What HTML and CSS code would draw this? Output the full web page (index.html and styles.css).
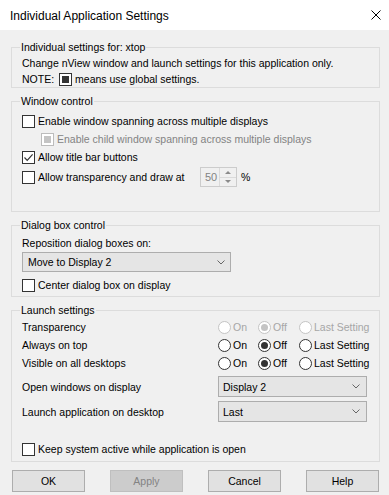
FILE: index.html
```html
<!DOCTYPE html>
<html>
<head>
<meta charset="utf-8">
<title>Individual Application Settings</title>
<link rel="stylesheet" href="styles.css">
</head>
<body>
<div class="titlebar">
  <span class="title">Individual Application Settings</span>
  <svg class="close" width="10" height="10" viewBox="0 0 10 10"><path d="M0.5 0.5 L9.5 9.5 M9.5 0.5 L0.5 9.5" stroke="#000" stroke-width="1" fill="none"/></svg>
</div>
<div class="content">
  <fieldset class="group g1">
    <legend>Individual settings for: xtop</legend>
    <div class="line">Change nView window and launch settings for this application only.</div>
    <div class="line"><span>NOTE:</span><span class="cb ind note-box"></span><span>means use global settings.</span></div>
  </fieldset>

  <fieldset class="group g2">
    <legend>Window control</legend>
    <div class="row"><span class="cb"></span><span>Enable window spanning across multiple displays</span></div>
    <div class="row indent disabled"><span class="cb dis ind"></span><span>Enable child window spanning across multiple displays</span></div>
    <div class="row"><span class="cb"><svg width="11" height="11" viewBox="0 0 11 11"><path d="M1.5 5.5 L4.2 8.3 L9.6 2.4" stroke="#333" stroke-width="1.2" fill="none"/></svg></span><span>Allow title bar buttons</span></div>
    <div class="row tall"><span class="cb"></span><span class="spin-label">Allow transparency and draw at</span>
      <div class="spin"><span class="spin-val">50</span><span class="spin-btns"><span class="sb"><i class="tri up"></i></span><span class="sb"><i class="tri down"></i></span></span></div>
      <span class="pct">%</span>
    </div>
  </fieldset>

  <fieldset class="group g3">
    <legend>Dialog box control</legend>
    <div class="line">Reposition dialog boxes on:</div>
    <div class="combo combo-wide"><span>Move to Display 2</span><svg width="8" height="5" viewBox="0 0 8 5"><path d="M0.5 0.5 L4 4 L7.5 0.5" stroke="#666" stroke-width="1" fill="none"/></svg></div>
    <div class="row gap4"><span class="cb"></span><span>Center dialog box on display</span></div>
  </fieldset>

  <fieldset class="group g4">
    <legend>Launch settings</legend>
    <div class="lrow"><span class="llabel">Transparency</span>
      <div class="radios disabled">
        <span class="opt"><span class="rb dis"></span>On</span>
        <span class="opt"><span class="rb dis on"></span>Off</span>
        <span class="opt"><span class="rb dis"></span>Last Setting</span>
      </div>
    </div>
    <div class="lrow"><span class="llabel">Always on top</span>
      <div class="radios">
        <span class="opt"><span class="rb"></span>On</span>
        <span class="opt"><span class="rb on"></span>Off</span>
        <span class="opt"><span class="rb"></span>Last Setting</span>
      </div>
    </div>
    <div class="lrow"><span class="llabel">Visible on all desktops</span>
      <div class="radios">
        <span class="opt"><span class="rb"></span>On</span>
        <span class="opt"><span class="rb on"></span>Off</span>
        <span class="opt"><span class="rb"></span>Last Setting</span>
      </div>
    </div>
    <div class="crow first"><span class="llabel">Open windows on display</span>
      <div class="combo combo-narrow"><span>Display 2</span><svg width="8" height="5" viewBox="0 0 8 5"><path d="M0.5 0.5 L4 4 L7.5 0.5" stroke="#666" stroke-width="1" fill="none"/></svg></div>
    </div>
    <div class="crow"><span class="llabel">Launch application on desktop</span>
      <div class="combo combo-narrow"><span>Last</span><svg width="8" height="5" viewBox="0 0 8 5"><path d="M0.5 0.5 L4 4 L7.5 0.5" stroke="#666" stroke-width="1" fill="none"/></svg></div>
    </div>
    <div class="row keep"><span class="cb"></span><span>Keep system active while application is open</span></div>
  </fieldset>

  <div class="buttons">
    <div class="btn">OK</div>
    <div class="btn dis">Apply</div>
    <div class="btn">Cancel</div>
    <div class="btn">Help</div>
  </div>
</div>
</body>
</html>
```

FILE: styles.css
```css
* { box-sizing: border-box; }
html, body { margin: 0; padding: 0; }
body {
  width: 389px;
  height: 495px;
  overflow: hidden;
  background: #f0f0f0;
  font-family: "Liberation Sans", Arial, sans-serif;
  font-size: 10.5px;
  color: #000;
}
.titlebar {
  height: 30px;
  background: #fff;
  display: flex;
  align-items: center;
  justify-content: space-between;
  padding: 0 8px 0 10px;
}
.title { font-size: 12px; margin-top: 2px; }
.close { display: block; margin-top: -1px; }

.content { padding: 0 9px 0 11px; }

.group {
  margin: 7px 0 0;
  border: 1px solid #dcdcdc;
  padding: 0 9px 0 10px;
  min-width: 0;
}
.group legend {
  padding: 0 1px;
  margin-left: -2px;
  height: 13px;
  line-height: 13px;
}
.g1 { margin-top: 11px; padding-top: 1px; padding-bottom: 0; }
.g2 { padding-top: 4px; padding-bottom: 23px; }
.g3 { padding-top: 3px; padding-bottom: 2px; }
.g4 { padding-top: 1px; padding-bottom: 3px; }

.line {
  height: 16px;
  display: flex;
  align-items: center;
  white-space: nowrap;
}
.note-box { margin: 0 3px 0 5px; }

.row {
  height: 18px;
  display: flex;
  align-items: center;
  gap: 3px;
  white-space: nowrap;
}
.row.tall { height: 22px; }
.row.indent { padding-left: 19px; }
.row.gap4 { margin-top: 4px; }
.row.keep { margin-top: 18px; }
.disabled { color: #838383; }

.cb {
  flex: none;
  width: 13px;
  height: 13px;
  border: 1px solid #333;
  background: #fff;
  display: flex;
  align-items: center;
  justify-content: center;
}
.cb svg { display: block; }
.cb.ind::after {
  content: "";
  width: 7px;
  height: 7px;
  background: #333;
}
.cb.dis { border-color: #bcbcbc; }
.cb.dis.ind::after { background: #c4c4c4; }

.spin-label { width: 159px; flex: none; }
.spin {
  flex: none;
  display: flex;
  width: 37px;
  height: 20px;
  border: 1px solid #cccccc;
  background: #f0f0f0;
}
.spin-val {
  flex: 1;
  padding-left: 4px;
  line-height: 18px;
  font-size: 11px;
  color: #838383;
}
.spin-btns {
  width: 17px;
  display: flex;
  flex-direction: column;
  border-left: 1px solid #dadada;
}
.sb {
  flex: 1;
  display: flex;
  align-items: center;
  justify-content: center;
}
.sb:first-child { border-bottom: 1px solid #dadada; }
.tri { display: block; width: 0; height: 0; border-left: 3px solid transparent; border-right: 3px solid transparent; }
.tri.up { border-bottom: 3px solid #8a8a8a; }
.tri.down { border-top: 3px solid #8a8a8a; }
.pct { margin-left: 1px; }

.combo {
  display: flex;
  align-items: center;
  justify-content: space-between;
  border: 1px solid #adadad;
  background: #e5e5e5;
  padding: 0 5px 0 5px;
  white-space: nowrap;
}
.combo svg { display: block; }
.combo-wide { width: 209px; height: 20px; margin-top: 1px; }
.combo-narrow { width: 149px; height: 21px; padding-left: 4px; padding-right: 6px; }

.lrow, .crow {
  display: flex;
  align-items: center;
  white-space: nowrap;
}
.lrow { height: 18px; }
.crow { margin-top: 4px; }
.llabel { width: 196px; flex: none; }

.radios { display: flex; align-items: center; }
.opt { display: flex; align-items: center; gap: 2px; }
.opt:nth-child(1) { width: 40px; }
.opt:nth-child(2) { width: 41px; }
.radios.disabled { color: #a6a6a6; }

.rb {
  flex: none;
  width: 13px;
  height: 13px;
  border-radius: 50%;
  border: 1px solid #333;
  background: #fff;
  display: flex;
  align-items: center;
  justify-content: center;
}
.rb.on::after {
  content: "";
  width: 7px;
  height: 7px;
  border-radius: 50%;
  background: #333;
}
.rb.dis { border-color: #c4c4c4; }
.rb.dis.on::after { background: #c4c4c4; }

.buttons {
  margin-top: 8px;
  padding: 0 1px 0 1px;
  display: flex;
  justify-content: space-between;
}
.btn {
  width: 73px;
  height: 22px;
  border: 1px solid #adadad;
  background: #e1e1e1;
  display: flex;
  align-items: center;
  justify-content: center;
}
.btn.dis {
  background: #cccccc;
  border-color: #bfbfbf;
  color: #838383;
}
```
